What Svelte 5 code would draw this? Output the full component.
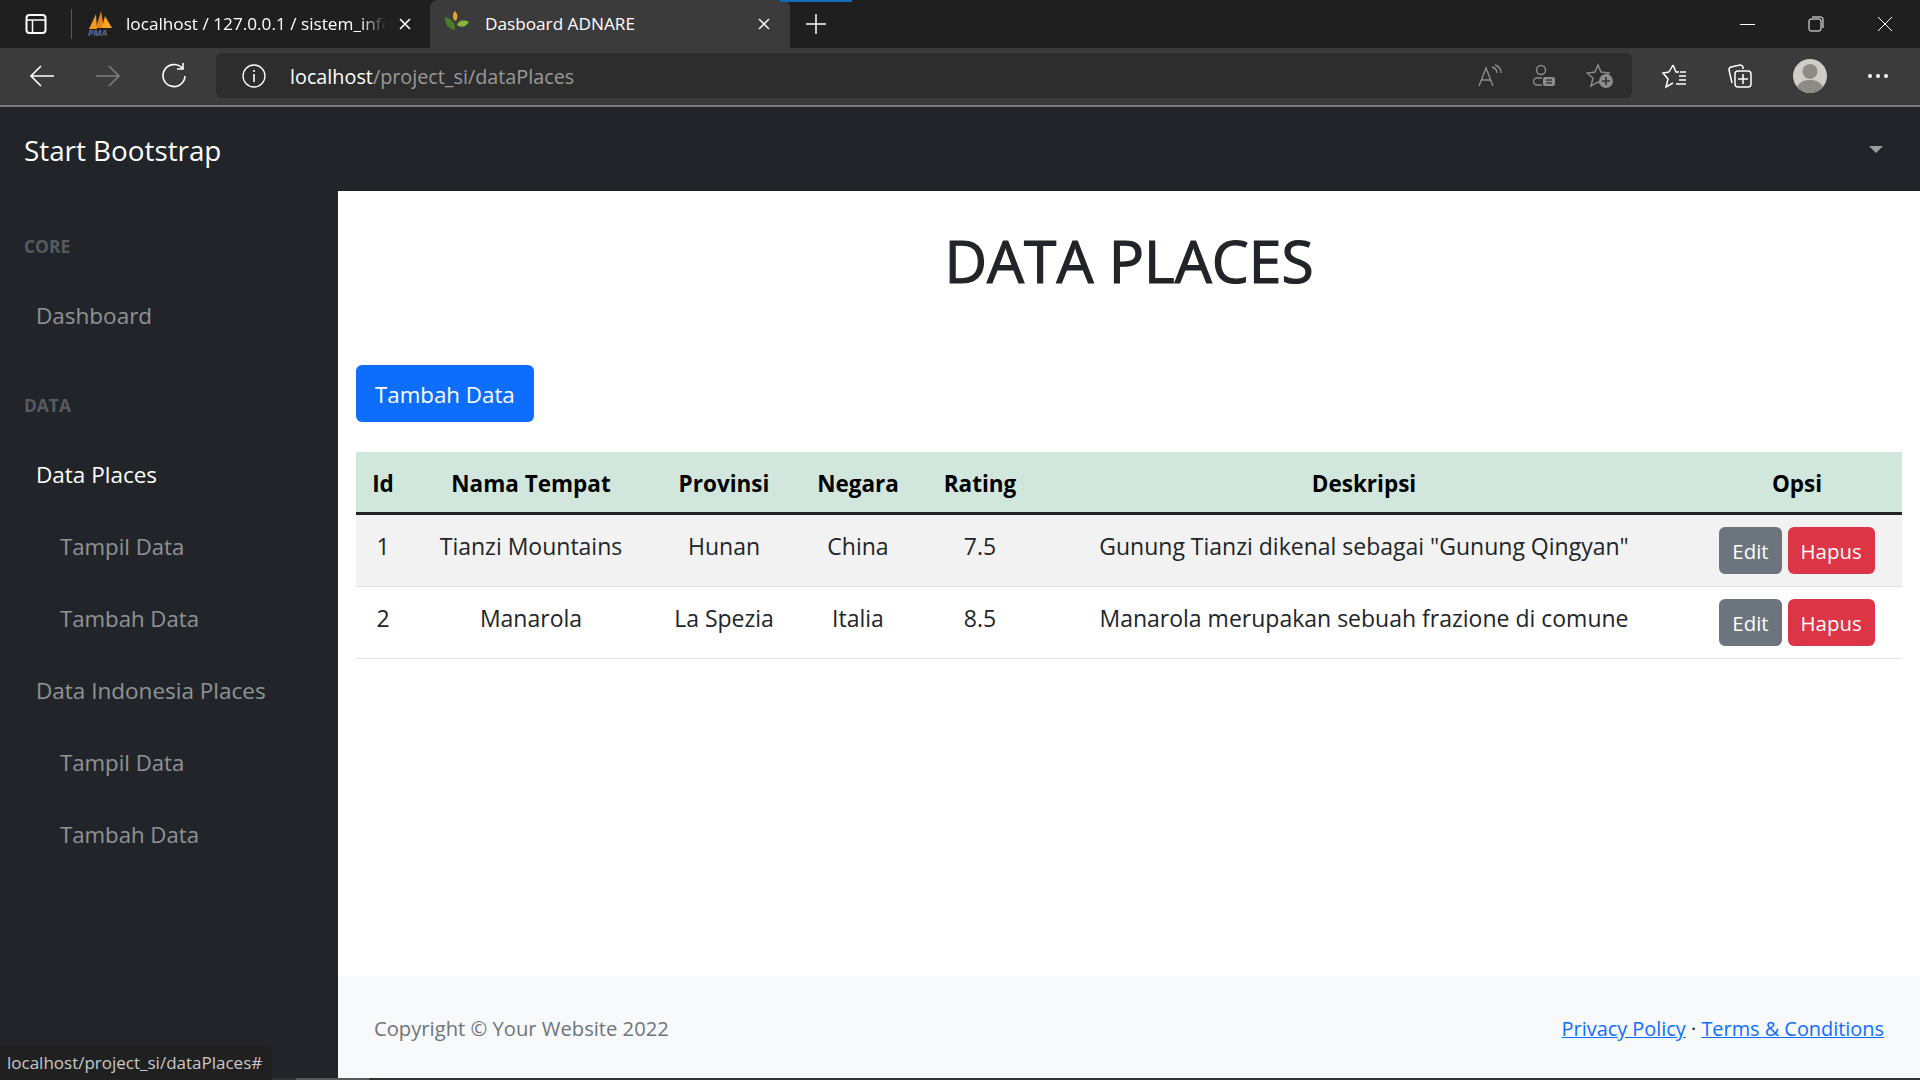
<script>
	const places = [
		{ id: 1, name: 'Tianzi Mountains', province: 'Hunan', country: 'China', rating: '7.5', desc: 'Gunung Tianzi dikenal sebagai "Gunung Qingyan"' },
		{ id: 2, name: 'Manarola', province: 'La Spezia', country: 'Italia', rating: '8.5', desc: 'Manarola merupakan sebuah frazione di comune' }
	];
</script>

<div class="window">
	<div class="tabstrip">
		<svg class="tabs-btn" width="24" height="24" viewBox="0 0 24 24" fill="none" stroke="#fff" stroke-width="2"><rect x="2.5" y="3" width="19" height="18" rx="3" /><path d="M3 8h18M8.5 8v13" stroke-width="1.5" /></svg>
		<span class="tab-sep"></span>
		<div class="tab">
			<svg class="favicon" width="26" height="28" viewBox="0 0 26 28">
				<path d="M2 19 9 4l1 15z" fill="#f39a1f" />
				<path d="M9 18 14 1l3 17z" fill="#e9861a" />
				<path d="M15 18 18 6l7 12z" fill="#f6a623" />
				<text x="1" y="26" font-size="9" font-weight="700" font-style="italic" fill="#5b6a9c">PMA</text>
			</svg>
			<span class="tab-title fade">localhost / 127.0.0.1 / sistem_informasi</span>
			<svg class="tab-x" width="14" height="14" viewBox="0 0 14 14" stroke="#fff" stroke-width="1.6"><path d="M2 2l10 10M12 2 2 12" /></svg>
		</div>
		<div class="tab active">
			<svg class="favicon leaf" width="26" height="26" viewBox="0 0 26 26">
				<path d="M11 19C4 18 0 12 1 6c6 1 11 6 10 13z" fill="#4c7a2a" />
				<path d="M10 9C8 6 9 2 11 0c3 3 3 6 1 10z" fill="#e8a32c" />
				<path d="M13 14c1-4 6-6 12-3-3 5-8 6-12 3z" fill="#8ab53a" />
			</svg>
			<span class="tab-title">Dasboard ADNARE</span>
			<svg class="tab-x" width="14" height="14" viewBox="0 0 14 14" stroke="#e8e8e8" stroke-width="1.6"><path d="M2 2l10 10M12 2 2 12" /></svg>
		</div>
		<span class="new-tab">
			<i class="blue-mark"></i>
			<svg width="22" height="22" viewBox="0 0 22 22" stroke="#fff" stroke-width="1.5"><path d="M11 1v20M1 11h20" /></svg>
		</span>
		<div class="win-controls">
			<svg width="16" height="16" viewBox="0 0 16 16" stroke="#fff" stroke-width="1"><path d="M1 8.5h15" /></svg>
			<svg width="16" height="16" viewBox="0 0 16 16" fill="none" stroke="#fff" stroke-width="1"><rect x="1" y="3" width="12" height="12" rx="2" /><path d="M4 1h9a2 2 0 0 1 2 2v9" /></svg>
			<svg width="16" height="16" viewBox="0 0 16 16" stroke="#fff" stroke-width="1"><path d="M1 1l14 14M15 1 1 15" /></svg>
		</div>
	</div>

	<div class="toolbar">
		<span class="tool">
			<svg width="26" height="26" viewBox="0 0 26 26" fill="none" stroke="#fff" stroke-width="1.6"><path d="M25 13H2M12 3 2 13l10 10" /></svg>
		</span>
		<span class="tool">
			<svg width="26" height="26" viewBox="0 0 26 26" fill="none" stroke="#7d7d7d" stroke-width="1.6"><path d="M1 13h23M14 3l10 10-10 10" /></svg>
		</span>
		<span class="tool">
			<svg width="26" height="26" viewBox="0 0 26 26" fill="none" stroke="#fff" stroke-width="1.6"><path d="M21 5a11 11 0 1 0 3 8M22 0v6h-6" /></svg>
		</span>
		<div class="addressbar">
			<svg class="info" width="24" height="24" viewBox="0 0 24 24" fill="none" stroke="#fff" stroke-width="1.3"><circle cx="12" cy="12" r="11" /><path d="M12 10v8M12 6v2" stroke-width="1.6" /></svg>
			<span class="url"><b>localhost</b>/project_si/dataPlaces</span>
			<div class="addr-icons">
				<svg width="24" height="24" viewBox="0 0 24 24" fill="none" stroke="#8c8c8c" stroke-width="1.4"><path d="M1 22 8 4l7 18M4 16h9M14 3c3 1 5 3 5 6M17 1c3 1 6 4 6 8" /></svg>
				<svg width="24" height="24" viewBox="0 0 24 24" fill="none" stroke="#8c8c8c" stroke-width="1.4"><circle cx="9" cy="6" r="4.5" /><path d="M10 14H5a3 3 0 0 0 0 7h5" /><rect x="11" y="13" width="12" height="9" rx="2" fill="#8c8c8c" stroke="none" /><path d="M14 16h6M14 19h6" stroke="#333" /></svg>
				<svg width="28" height="26" viewBox="0 0 28 26" fill="none" stroke="#8c8c8c" stroke-width="1.4"><path d="M12 2l3 7 8 1-6 5 2 7-7-3-7 4 2-8-6-5 8-1z" /><circle cx="20" cy="18" r="7" fill="#8c8c8c" stroke="none" /><path d="M20 14v8M16 18h8" stroke="#333" stroke-width="1.6" /></svg>
			</div>
		</div>
		<div class="tool-icons">
			<svg width="26" height="26" viewBox="0 0 26 26" fill="none" stroke="#fff" stroke-width="1.5"><path d="M12 2l3 7 3 0M8 9l4-7M8 9l-6 1 5 6-2 8 7-4M18 13h7M18 17h7M15 21h10M19 9h6" /></svg>
			<svg width="26" height="26" viewBox="0 0 26 26" fill="none" stroke="#fff" stroke-width="1.5"><path d="M5 20 2 7a3 3 0 0 1 2-3l9-2a3 3 0 0 1 3 2v2" /><rect x="8" y="8" width="16" height="16" rx="3" /><path d="M16 11v10M11 16h10" /></svg>
			<svg width="34" height="34" viewBox="0 0 34 34"><circle cx="17" cy="17" r="17" fill="#cfcdc8" /><circle cx="17" cy="12.5" r="7.5" fill="#8e8b87" /><path d="M4 28c3-6 8-7 13-7s10 1 13 7a17 17 0 0 1-26 0z" fill="#8e8b87" /></svg>
			<svg width="22" height="6" viewBox="0 0 22 6" fill="#fff"><circle cx="3" cy="3" r="2" /><circle cx="11" cy="3" r="2" /><circle cx="19" cy="3" r="2" /></svg>
		</div>
	</div>

	<div class="page">
		<nav class="topnav">
			<a class="brand" href="#top">Start Bootstrap</a>
			<i class="caret"></i>
		</nav>
		<div class="layout">
			<aside class="sidenav">
				<div class="heading">CORE</div>
				<a class="link" href="#top">Dashboard</a>
				<div class="heading">DATA</div>
				<a class="link current" href="#top">Data Places</a>
				<a class="link sub" href="#top">Tampil Data</a>
				<a class="link sub" href="#top">Tambah Data</a>
				<a class="link" href="#top">Data Indonesia Places</a>
				<a class="link sub" href="#top">Tampil Data</a>
				<a class="link sub" href="#top">Tambah Data</a>
			</aside>
			<div class="content">
				<main>
					<h1>DATA PLACES</h1>
					<button class="btn primary">Tambah Data</button>
					<table>
						<colgroup>
							<col style="width: 54px" />
							<col style="width: 242px" />
							<col style="width: 144px" />
							<col style="width: 124px" />
							<col style="width: 120px" />
							<col style="width: 648px" />
							<col />
						</colgroup>
						<thead>
							<tr>
								<th>Id</th>
								<th>Nama Tempat</th>
								<th>Provinsi</th>
								<th>Negara</th>
								<th>Rating</th>
								<th>Deskripsi</th>
								<th class="opsi">Opsi</th>
							</tr>
						</thead>
						<tbody>
							{#each places as p}
								<tr>
									<td>{p.id}</td>
									<td>{p.name}</td>
									<td>{p.province}</td>
									<td>{p.country}</td>
									<td>{p.rating}</td>
									<td>{p.desc}</td>
									<td class="actions">
										<button class="btn secondary">Edit</button>
										<button class="btn danger">Hapus</button>
									</td>
								</tr>
							{/each}
						</tbody>
					</table>
				</main>
				<footer>
					<span>Copyright © Your Website 2022</span>
					<span class="legal"><a href="#top">Privacy Policy</a> · <a href="#top">Terms &amp; Conditions</a></span>
				</footer>
			</div>
		</div>
		<div class="scrollbar"><i></i></div>
		<div class="status">localhost/project_si/dataPlaces#</div>
	</div>
</div>

<style>
	:global(body) {
		margin: 0;
		overflow: hidden;
	}

	.window {
		display: flex;
		flex-direction: column;
		width: 1920px;
		height: 1080px;
		font-family: 'Open Sans', 'Liberation Sans', sans-serif;
		overflow: hidden;
	}

	/* browser chrome */
	.tabstrip {
		display: flex;
		align-items: center;
		height: 48px;
		background: #1f1f1f;
		color: #fff;
		font-size: 17.2px;
	}

	.tabs-btn {
		margin-left: 24px;
	}

	.tab-sep {
		width: 1px;
		height: 30px;
		margin: 0 0 0 23px;
		background: #5a5a5a;
	}

	.tab {
		display: flex;
		align-items: center;
		height: 48px;
		box-sizing: border-box;
		width: 358px;
		padding: 0 18px 0 15px;
	}

	.tab.active {
		width: 360px;
		padding: 0 19px 0 14px;
		background: #3b3b3b;
		border-radius: 8px 8px 0 0;
	}

	.favicon {
		flex: none;
		margin-right: 13px;
	}

	.favicon.leaf {
		margin-right: 15px;
	}

	.tab-title {
		flex: 1;
		padding-bottom: 2px;
		white-space: nowrap;
		overflow: hidden;
	}

	.fade {
		-webkit-mask-image: linear-gradient(to right, #000 90%, transparent);
		mask-image: linear-gradient(to right, #000 90%, transparent);
	}

	.tab-x {
		flex: none;
		margin-left: 12px;
	}

	.new-tab {
		position: relative;
		display: flex;
		align-items: center;
		justify-content: center;
		width: 52px;
		height: 48px;
	}

	.blue-mark {
		position: absolute;
		top: 0;
		left: -10px;
		width: 72px;
		height: 2px;
		background: #0f6cbd;
	}

	.win-controls {
		display: flex;
		align-items: center;
		gap: 53px;
		margin-left: auto;
		padding-right: 27px;
	}

	.toolbar {
		display: flex;
		align-items: center;
		height: 57px;
		background: #3b3b3b;
		padding: 0 0 0 9px;
		box-sizing: border-box;
		padding-bottom: 2px;
	}

	.tool {
		display: flex;
		justify-content: center;
		width: 66px;
	}

	.addressbar {
		display: flex;
		align-items: center;
		width: 1416px;
		height: 45px;
		margin-left: 9px;
		background: #2d2d2d;
		border-radius: 6px;
		box-sizing: border-box;
		padding-left: 26px;
		padding-right: 18px;
		flex: none;
	}

	.url {
		margin-left: 24px;
		padding-top: 1px;
		font-size: 19.8px;
		color: #9a9a9a;
	}

	.url b {
		font-weight: 400;
		color: #fff;
	}

	.addr-icons {
		display: flex;
		align-items: center;
		gap: 30px;
		margin-left: auto;
	}

	.tool-icons {
		display: flex;
		align-items: center;
		margin-left: 29px;
		gap: 40px;
	}

	/* page */
	.page {
		position: relative;
		flex: 1;
		display: flex;
		flex-direction: column;
		border-top: 2px solid #7a7a7a;
		min-height: 0;
		font-size: 22.5px;
		line-height: 36px;
		color: #212529;
		background: #fff;
	}

	.topnav {
		display: flex;
		align-items: center;
		justify-content: space-between;
		height: 84px;
		flex: none;
		background: #212529;
		padding: 0 37px 0 24px;
	}

	.brand {
		padding-top: 2px;
		color: #fff;
		font-size: 27.8px;
		text-decoration: none;
	}

	.caret {
		width: 0;
		height: 0;
		border-left: 7px solid transparent;
		border-right: 7px solid transparent;
		border-top: 7px solid #9a9b9d;
	}

	.layout {
		flex: 1;
		display: flex;
		min-height: 0;
	}

	.sidenav {
		display: flex;
		flex-direction: column;
		width: 338px;
		flex: none;
		background: #212529;
	}

	.heading {
		padding: 42px 24px 18px;
		font-size: 17.4px;
		line-height: 27px;
		font-weight: 700;
		color: rgba(255, 255, 255, 0.25);
	}

	.link {
		padding: 20px 36px 16px;
		color: rgba(255, 255, 255, 0.5);
		text-decoration: none;
	}

	.link.current {
		color: #fff;
	}

	.link.sub {
		padding-left: 60px;
		font-size: 22.2px;
	}

	.content {
		flex: 1;
		display: flex;
		flex-direction: column;
		min-width: 0;
	}

	main {
		flex: 1;
		padding: 0 18px;
	}

	h1 {
		margin: 33px 0 69px;
		text-align: center;
		font-size: 58.7px;
		line-height: 72px;
		font-weight: 500;
		-webkit-text-stroke: 1.2px #212529;
	}

	.btn {
		display: inline-block;
		box-sizing: border-box;
		height: 57px;
		padding: 3px 18px 0;
		border: 1.5px solid transparent;
		border-radius: 6px;
		font: inherit;
		color: #fff;
	}

	.primary {
		display: block;
		background: #0d6efd;
		font-size: 22.3px;
	}

	.secondary {
		background: #6c757d;
	}

	.danger {
		background: #dc3545;
	}

	table {
		width: 100%;
		margin-top: 30px;
		border-collapse: collapse;
		table-layout: fixed;
		font-size: 23px;
	}

	th,
	td {
		padding: 13px 12px 11px;
		text-align: center;
		vertical-align: top;
		white-space: nowrap;
	}

	thead {
		background: #d1e7dd;
		color: #000;
	}

	th {
		padding: 14px 12px 10px;
		font-weight: 700;
		font-size: 22.5px;
		border-bottom: 3px solid #212529;
	}

	th.opsi {
		padding-left: 16px;
	}

	tbody tr {
		border-bottom: 1.5px solid #dee2e6;
	}

	tbody tr:nth-child(odd) {
		background: #f2f2f2;
	}

	td.actions {
		padding: 12px 12px 12px 16px;
	}

	.actions .btn {
		height: 47px;
		padding: 1px 12px 0;
		font-size: 20.4px;
		vertical-align: top;
	}

	footer {
		display: flex;
		align-items: center;
		justify-content: space-between;
		height: 102px;
		flex: none;
		box-sizing: border-box;
		padding: 1px 36px 0;
		background: #f8f9fa;
		font-size: 20.2px;
		color: #6c757d;
	}

	.legal {
		padding-top: 3px;
		font-size: 19.9px;
		color: #212529;
	}

	.legal a {
		color: #0d6efd;
	}

	.scrollbar {
		height: 2px;
		flex: none;
		background: #333;
	}

	.scrollbar i {
		display: block;
		width: 73px;
		height: 2px;
		margin-left: 296px;
		background: #5a5a5a;
	}

	.status {
		position: absolute;
		left: 0;
		bottom: 0;
		width: 272px;
		height: 35px;
		box-sizing: border-box;
		padding-left: 7px;
		background: #202020;
		border-top-right-radius: 6px;
		color: #c8c8c8;
		font-size: 17px;
		line-height: 35px;
		white-space: nowrap;
	}
</style>
